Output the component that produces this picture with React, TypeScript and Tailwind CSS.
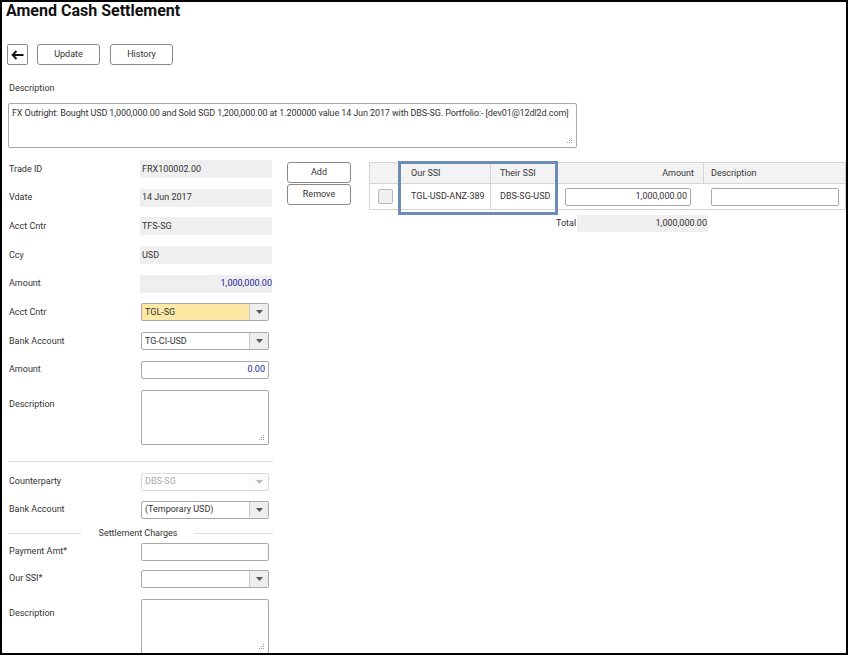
import React from "react";

const Caret = () => (
  <svg width="7" height="4" viewBox="0 0 7 4"><path d="M0 0h7L3.5 4z" fill="#555" /></svg>
);

const Grip = () => (
  <svg width="6" height="6" viewBox="0 0 6 6" className="absolute right-[3px] bottom-[3px]">
    <rect x="4" y="0" width="1" height="1" fill="#999" />
    <rect x="2" y="2" width="1" height="1" fill="#999" />
    <rect x="4" y="2" width="1" height="1" fill="#999" />
    <rect x="0" y="4" width="1" height="1" fill="#999" />
    <rect x="2" y="4" width="1" height="1" fill="#999" />
    <rect x="4" y="4" width="1" height="1" fill="#999" />
  </svg>
);

function Row({ label, children, top = false, h = "h-[28.7px]" }: { label: string; children: React.ReactNode; top?: boolean; h?: string }) {
  return (
    <div className={`flex ${h}`}>
      <div className={`w-[138px] pl-[7px] ${top ? "pt-[10px]" : "h-[18px] flex items-center"}`}>{label}</div>
      {children}
    </div>
  );
}

function Gray({ v, blue = false }: { v: string; blue?: boolean }) {
  return (
    <div className={`w-[132px] h-[18px] bg-[#efefef] flex items-center ${blue ? "justify-end text-[#22229a]" : "pl-[2px]"}`}>{v}</div>
  );
}

function Select({ v, yellow = false, disabled = false }: { v: string; yellow?: boolean; disabled?: boolean }) {
  return (
    <div className={`ml-[1px] w-[128px] h-[18px] border rounded-[2px] flex ${disabled ? "border-[#dcdcdc]" : "border-[#a8a8a8]"} ${yellow ? "bg-[#fde8a6]" : "bg-white"}`}>
      <div className={`flex-1 flex items-center px-[3px] ${disabled ? "text-[#aaa]" : ""}`}>{v}</div>
      <div className={`w-[19px] border-l flex items-center justify-center ${disabled ? "border-[#e4e4e4] bg-[#f7f7f7] opacity-40" : "border-[#c8c8c8] bg-[#eeeeee]"}`}>
        <Caret />
      </div>
    </div>
  );
}

function Input({ v = "", blue = false }: { v?: string; blue?: boolean }) {
  return (
    <div className={`ml-[1px] w-[128px] h-[18px] border border-[#a8a8a8] rounded-[2px] bg-white flex items-center justify-end px-[3px] ${blue ? "text-[#22229a]" : ""}`}>{v}</div>
  );
}

function TextArea({ h }: { h: string }) {
  return <div className={`relative ml-[1px] w-[128px] ${h} border border-[#a8a8a8] rounded-[2px] bg-white`}><Grip /></div>;
}

export default function App() {
  return (
    <div className="w-[850px] h-[657px] bg-white">
      <div
        className="w-[848px] h-[655px] border-2 border-black overflow-hidden text-[9px] text-[#333] leading-none"
        style={{ fontFamily: "Roboto, 'Liberation Sans', sans-serif" }}
      >
        <div className="pl-[4px] pt-[1px] h-[18px] text-[16px] font-bold text-[#111] leading-[16px]">Amend Cash Settlement</div>

        <div className="flex items-center mt-[24px] pl-[5px] h-[21px]">
          <div className="w-[21px] h-[21px] border border-[#8a8a8a] rounded-[2px] flex items-center justify-center bg-white">
            <svg width="13" height="10" viewBox="0 0 13 10"><path d="M12.5 5H2M5.5 1L1.5 5l4 4" stroke="#111" strokeWidth="1.8" fill="none" /></svg>
          </div>
          <div className="ml-[9px] w-[63px] h-[21px] border border-[#8a8a8a] rounded-[3px] flex items-center justify-center">Update</div>
          <div className="ml-[10px] w-[63px] h-[21px] border border-[#8a8a8a] rounded-[3px] flex items-center justify-center">History</div>
        </div>

        <div className="pl-[7px] mt-[19px]">Description</div>
        <div className="relative ml-[6px] mt-[10px] w-[569px] h-[45px] border border-[#a8a8a8] rounded-[2px] px-[3px] pt-[5px] whitespace-nowrap tracking-[-0.1px]">
          FX Outright: Bought USD 1,000,000.00 and Sold SGD 1,200,000.00 at 1.200000 value 14 Jun 2017 with DBS-SG. Portfolio:- [dev01@12dl2d.com]
          <Grip />
        </div>

        <div className="flex mt-[12px]">
          {/* left form */}
          <div className="w-[272px]">
            <Row label="Trade ID"><Gray v="FRX100002.00" /></Row>
            <Row label="Vdate"><Gray v="14 Jun 2017" /></Row>
            <Row label="Acct Cntr"><Gray v="TFS-SG" /></Row>
            <Row label="Ccy"><Gray v="USD" /></Row>
            <Row label="Amount"><Gray v="1,000,000.00" blue /></Row>
            <Row label="Acct Cntr"><Select v="TGL-SG" yellow /></Row>
            <Row label="Bank Account"><Select v="TG-CI-USD" /></Row>
            <Row label="Amount"><Input v="0.00" blue /></Row>
            <Row label="Description" top h="h-[55px]"><TextArea h="h-[55px]" /></Row>
            <div className="ml-[6px] mt-[16px] w-[266px] border-t border-[#dedede]" />
            <div className="h-[11px]" />
            <Row label="Counterparty" h="h-[28px]"><Select v="DBS-SG" disabled /></Row>
            <Row label="Bank Account" h="h-[23px]"><Select v="(Temporary USD)" /></Row>
            <div className="flex items-center h-[19px] ml-[6px] w-[266px]">
              <div className="w-[74px] border-t border-[#dedede]" />
              <div className="flex-1 text-center">Settlement Charges</div>
              <div className="w-[80px] border-t border-[#dedede]" />
            </div>
            <Row label="Payment Amt*" h="h-[27px]"><Input /></Row>
            <Row label="Our SSI*" h="h-[29px]"><Select v="" /></Row>
            <Row label="Description" top h="h-[55px]"><TextArea h="h-[55px]" /></Row>
          </div>

          {/* add/remove */}
          <div className="ml-[13px] mt-[2px] flex flex-col">
            <div className="w-[64px] h-[21px] border border-[#8a8a8a] rounded-[3px] flex items-center justify-center">Add</div>
            <div className="mt-[1px] w-[64px] h-[21px] border border-[#8a8a8a] rounded-[3px] flex items-center justify-center">Remove</div>
          </div>

          {/* table */}
          <div className="ml-[18px] mt-[2px] w-[500px]">
            <div className="relative">
              <div className="border border-[#d4d4d4]">
                <div className="flex h-[21px] bg-[#f3f3f3] border-b border-[#d4d4d4]">
                  <div className="w-[30px]" />
                  <div className="w-[90px] border-l border-[#d4d4d4] flex items-center pl-[10px]">Our SSI</div>
                  <div className="w-[67px] border-l border-[#d4d4d4] flex items-center pl-[9px]">Their SSI</div>
                  <div className="w-[146px] border-l border-[#d4d4d4] flex items-center justify-end pr-[9px]">Amount</div>
                  <div className="flex-1 border-l border-[#d4d4d4] flex items-center pl-[7px]">Description</div>
                </div>
                <div className="flex h-[25px] items-center">
                  <div className="w-[30px] flex justify-center">
                    <div className="w-[15px] h-[15px] border border-[#b8b8b8] rounded-[2px] bg-[#f0f0f0]" />
                  </div>
                  <div className="w-[90px] h-full border-l border-[#d4d4d4] flex items-center pl-[10px]">TGL-USD-ANZ-389</div>
                  <div className="w-[67px] h-full border-l border-[#d4d4d4] flex items-center pl-[9px]">DBS-SG-USD</div>
                  <div className="w-[146px] h-full flex items-center pl-[8px]">
                    <div className="w-[126px] h-[18px] border border-[#a8a8a8] rounded-[2px] flex items-center justify-end pr-[3px]">1,000,000.00</div>
                  </div>
                  <div className="flex-1 h-full flex items-center pl-[8px]">
                    <div className="w-[128px] h-[18px] border border-[#a8a8a8] rounded-[2px]" />
                  </div>
                </div>
              </div>
              <div className="absolute left-[29px] top-[-1px] w-[160px] h-[54px] border-[3px] border-[#6c8cb6]" />
            </div>
            <div className="flex items-center mt-[5px] h-[17px]">
              <div className="ml-[187px] w-[21px]">Total</div>
              <div className="w-[131px] h-[17px] bg-[#efefef] flex items-center justify-end pr-[1px]">1,000,000.00</div>
            </div>
          </div>
        </div>
      </div>
    </div>
  );
}
